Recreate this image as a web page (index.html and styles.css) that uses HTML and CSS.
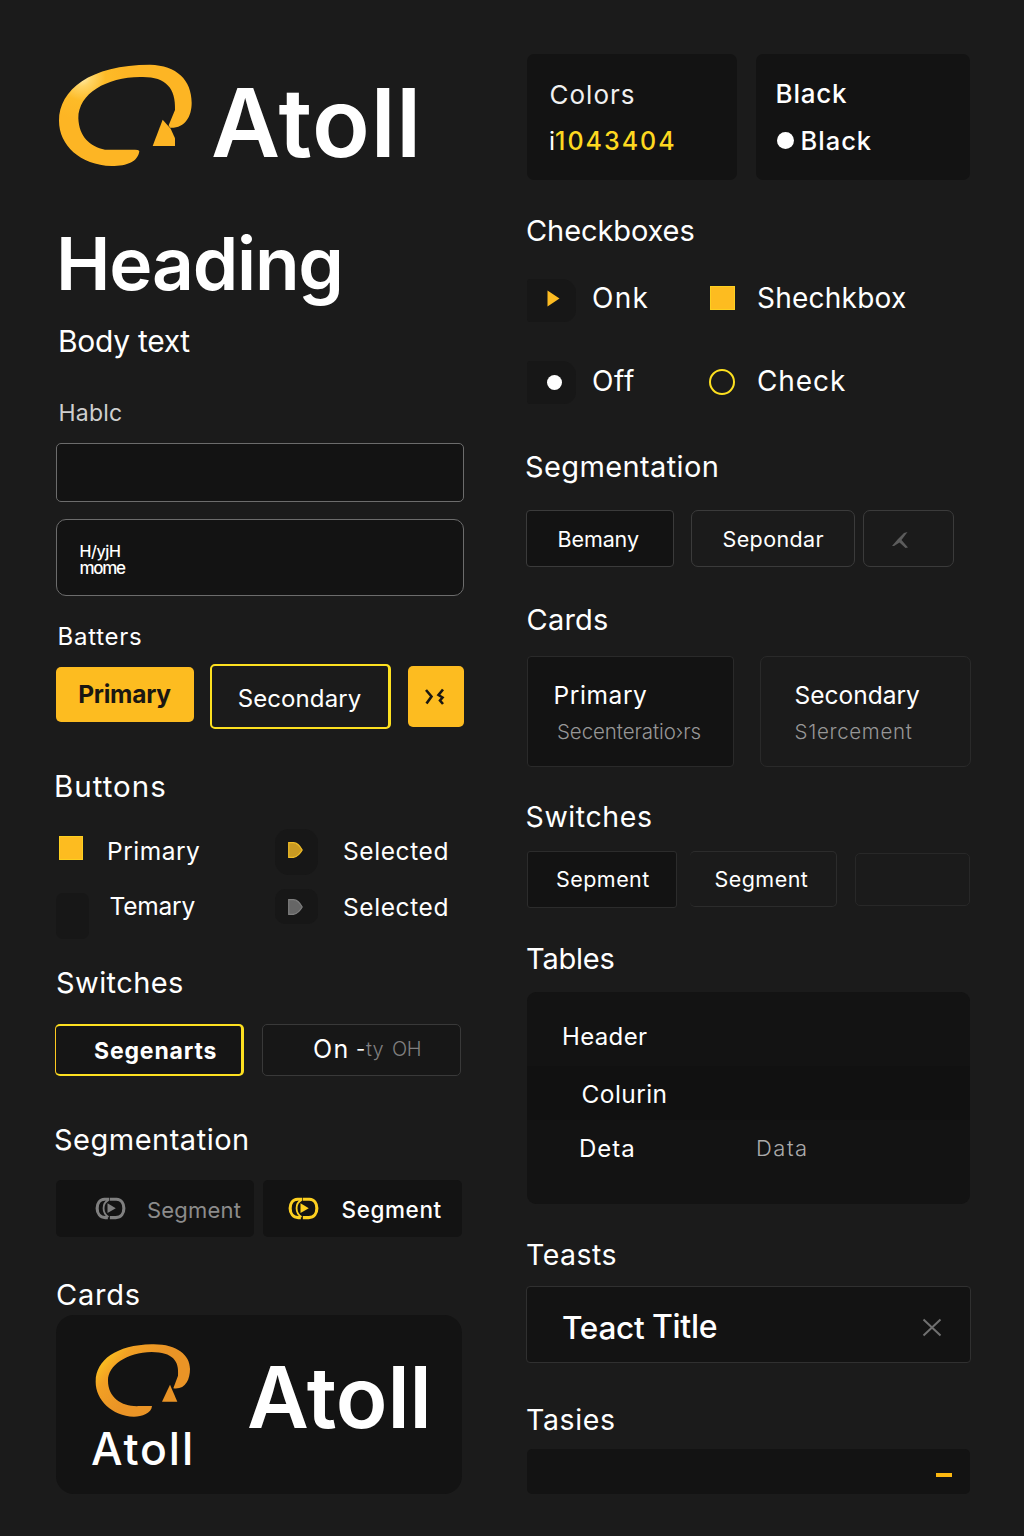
FILE: index.html
```html
<!DOCTYPE html>
<html lang="en">
<head>
<meta charset="utf-8">
<title>Atoll UI kit</title>
<link rel="stylesheet" href="styles.css">
</head>
<body>
<svg class="defs" aria-hidden="true">
  <defs>
    <radialGradient id="gold" gradientUnits="userSpaceOnUse" cx="125" cy="80" r="130">
      <stop offset="0" stop-color="#fff0b8"/>
      <stop offset=".22" stop-color="#ffd566"/>
      <stop offset=".55" stop-color="#fdbb28"/>
      <stop offset="1" stop-color="#fdb524"/>
    </radialGradient>
    <linearGradient id="amber" gradientUnits="userSpaceOnUse" x1="180" y1="170" x2="290" y2="260">
      <stop offset="0" stop-color="#fdc81f"/>
      <stop offset=".4" stop-color="#f2a024"/>
      <stop offset="1" stop-color="#ea9426"/>
    </linearGradient>
    <symbol id="link" viewBox="160 228 100 74">
      <path d="M206 237H192C177 238 169.500 250 169.500 264C169.500 280 179 292 194 292.500H202M208 237H228C243 238 250.500 250 250.500 264C250.500 280 242 292 226 292.500H208" fill="none" stroke="currentColor" stroke-width="9.500"/>
      <path d="M204 239C184 250 184 278 204 291" fill="none" stroke="currentColor" stroke-width="5.500"/>
      <path d="M201 249L226 264.500L201 279Z" fill="currentColor"/>
    </symbol>
  </defs>
</svg>
<main class="page">
  <div class="col left">
    <header class="brand">
      <svg class="brand-logo" viewBox="48 30 420 330">
        <path fill="url(#gold)" d="M298 303C294 335 262 348 215 348C120 345 57 285 57 212C57 120 150 44 330 44C410 46 455 90 455 158C455 200 435 235 390 233L386 226L405 180C408 112 375 78 300 81C200 82 115 130 115 205C117 260 150 290 195 299L285 299Q296 299 298 303Z"/>
        <path fill="url(#gold)" d="M368 209L392 236L405 265V288H338Z"/>
      </svg>
      <span class="wordmark">Atoll</span>
    </header>
    <h1 class="heading">Heading</h1>
    <p class="body-text">Body text</p>
    <p class="label">Hablc</p>
    <div class="input"></div>
    <div class="input area"><span class="ln1">H/yjH</span><span class="ln2">mome</span></div>
    <p class="label strong">Batters</p>
    <div class="btn-row">
      <div class="btn primary">Primary</div>
      <div class="btn outline">Secondary</div>
      <div class="btn icon">
        <svg width="22" height="18" viewBox="0 0 22 18" fill="none" stroke="#1a1712" stroke-width="2.6"><path d="M2 2L7.500 8.500L2.500 15.500M19 1.500L14.500 7L18.500 9.500L16 12.500L19 16"/></svg>
      </div>
    </div>
    <h2 class="title t-buttons">Buttons</h2>
    <div class="opt-row one">
      <i class="square"></i><span class="opt prim">Primary</span>
      <i class="tile"><svg width="15" height="16" viewBox="0 0 15 16"><path d="M.7.700H5.500C9.500 1 12 4 14.200 8C12 12 9.500 14.500 5.500 15.300H.7Z" fill="#c99a22" stroke="#f0bd28" stroke-width="1.200"/></svg></i>
      <span class="opt sel">Selected</span>
    </div>
    <div class="opt-row two">
      <i class="blank"></i><span class="opt tem">Temary</span>
      <i class="tile low"><svg width="15" height="16" viewBox="0 0 15 16"><path d="M.7.700H5.500C9.500 1 12 4 14.200 8C12 12 9.500 14.500 5.500 15.300H.7Z" fill="#666" stroke="#7e7e7e" stroke-width="1.200"/></svg></i>
      <span class="opt sel low">Selected</span>
    </div>
    <h2 class="title t-sw">Switches</h2>
    <div class="switch-row">
      <div class="switch active">Segenarts</div>
      <div class="switch"><span class="on">On</span><span class="dash">-</span><span class="off">ty</span><span class="off last">OH</span></div>
    </div>
    <h2 class="title t-seg">Segmentation</h2>
    <div class="seg-row">
      <div class="seg"><svg class="link"><use href="#link"/></svg><span>Segment</span></div>
      <div class="seg active"><svg class="link"><use href="#link"/></svg><span>Segment</span></div>
    </div>
    <h2 class="title t-cards">Cards</h2>
    <div class="logo-card">
      <div class="stack">
        <svg class="small-logo" viewBox="156 120 300 240">
          <path fill="url(#amber)" d="M336 318C335 340 305 350 282 350C215 347 167 300 167 245C167 180 230 135 335 133C410 131 450 165 450 207C450 240 435 270 400 265L414 227C418 182 398 157 335 156C260 158 204 195 204 242C204 295 250 322 300 318Z"/>
          <path fill="url(#amber)" d="M390 254L412 305H366Z"/>
        </svg>
        <span class="small-mark">Atoll</span>
      </div>
      <span class="big-mark">Atoll</span>
    </div>
  </div>

  <div class="col right">
    <div class="color-row">
      <div class="swatch"><span class="c1">Colors</span><span class="c2">i<b>1043404</b></span></div>
      <div class="swatch black"><span class="c3">Black</span><span class="c4"><i class="dot"></i>Black</span></div>
    </div>
    <h2 class="title r-check">Checkboxes</h2>
    <div class="check-row">
      <i class="ctile"><svg width="13" height="17" viewBox="0 0 13 17"><path d="M.5.500L12.500 8.500L.5 16.500Z" fill="#fdbc22"/></svg></i>
      <span class="chk onk">Onk</span>
      <i class="square wide"></i>
      <span class="chk box">Shechkbox</span>
    </div>
    <div class="check-row second">
      <i class="ctile"><i class="knob"></i></i>
      <span class="chk offw">Off</span>
      <i class="ring"></i>
      <span class="chk check">Check</span>
    </div>
    <h2 class="title r-seg">Segmentation</h2>
    <div class="pill-row">
      <div class="pill filled">Bemany</div>
      <div class="pill mid">Sepondar</div>
      <div class="pill back"><svg width="17" height="17" viewBox="0 0 17 17"><path d="M15.500 0L9.500 8L16 15.500L13.500 16L7.500 10.500L2 14H0L6 7L12 1Z" fill="#5c5c5c"/></svg></div>
    </div>
    <h2 class="title r-cards">Cards</h2>
    <div class="card-row">
      <div class="card filled"><span class="h">Primary</span><span class="s">Secenteratio›rs</span></div>
      <div class="card"><span class="h">Secondary</span><span class="s">S1ercement</span></div>
    </div>
    <h2 class="title r-sw">Switches</h2>
    <div class="tab-row">
      <div class="tab filled">Sepment</div>
      <div class="tab open">Segment</div>
      <div class="tab empty"></div>
    </div>
    <h2 class="title r-tab">Tables</h2>
    <div class="table">
      <div class="tr head"><span>Header</span></div>
      <div class="tr column"><span>Colurin</span></div>
      <div class="tr data"><span class="d1">Deta</span><span class="d2">Data</span></div>
    </div>
    <h2 class="title r-toast">Teasts</h2>
    <div class="toast">
      <span class="tt">Teact</span><span class="tt2">Title</span>
      <svg width="20" height="19" viewBox="0 0 20 19" fill="none" stroke="#707070" stroke-width="2"><path d="M1.500 1.500L18.500 17.500M18.500 1.500L1.500 17.500"/></svg>
    </div>
    <h2 class="title r-tas">Tasies</h2>
    <div class="bar"><i class="minus"></i></div>
  </div>
</main>
</body>
</html>
```
FILE: styles.css
```css
* { box-sizing: border-box; }
body {
  margin: 0;
  background: #1b1b1b;
  color: #fff;
  font-family: "Inter", sans-serif;
  -webkit-font-smoothing: antialiased;
}
h1, h2, p { margin: 0; font-weight: 400; }
i { font-style: normal; flex: none; }
svg { display: block; flex: none; }
span { white-space: nowrap; }
.defs { position: absolute; width: 0; height: 0; }

.page { display: flex; width: 1024px; height: 1536px; overflow: hidden; }
.col { display: flex; flex-direction: column; flex: none; }
.left { width: 408px; margin-left: 56px; }
.right { width: 443px; margin-left: 63px; }

.title { font-size: 29px; line-height: 30px; height: 30px; white-space: nowrap; }

/* brand */
.brand { display: flex; align-items: center; gap: 15px; height: 126px; margin-top: 60px; }
.brand-logo { width: 140px; height: 110px; align-self: flex-start; }
.wordmark { font-size: 95px; line-height: 100px; font-weight: 600; letter-spacing: .8px; }
.heading { margin: 38px 0 0 0; font-size: 73px; line-height: 80px; font-weight: 600; letter-spacing: -1.2px; }
.body-text { margin: 22px 0 0 2px; font-size: 30px; line-height: 30px; letter-spacing: -.3px; }
.label { margin: 44.500px 0 0 2.500px; font-size: 23px; line-height: 24px; letter-spacing: .2px; color: #cfcfcf; }
.label.strong { margin: 29px 0 0 1.500px; font-size: 24px; font-weight: 400; letter-spacing: .75px; color: #fff; }

.input { height: 59px; margin-top: 18.500px; border: 1.500px solid #6c6c6c; border-radius: 5px; background: #131313; }
.area { display: flex; flex-direction: column; height: 77px; margin-top: 17px; padding: 23px 0 0 22.500px; border: 1px solid #6c6c6c; border-radius: 10px; font-weight: 500; }
.ln1 { font-size: 16px; line-height: 17px; letter-spacing: -.4px; }
.ln2 { font-size: 17px; line-height: 17px; letter-spacing: -1.300px; }

/* buttons */
.btn-row { display: flex; height: 65px; margin: 14.500px 0 0 -.5px; }
.btn { display: flex; justify-content: center; align-items: center; flex: none; border-radius: 5px; }
.btn.primary { width: 138px; height: 55px; margin-top: 3px; background: #fdbc20; color: #1a1712; font-size: 24.500px; font-weight: 700; letter-spacing: -.25px; }
.btn.outline { width: 181px; height: 65px; margin-left: 16px; padding: 4px 0 0 0; border: 2px solid #fde020; border-right-width: 3px; font-size: 24px; letter-spacing: .09px; }
.btn.icon { width: 56px; height: 61px; margin: 2px 0 0 17px; padding: 1px 1px 0 0; background: #fdbc20; }

.t-buttons { margin-top: 42px; margin-left: -2px; font-size: 29.5px; letter-spacing: 1px; }
.opt-row { display: flex; align-items: flex-start; }
.opt-row.one { height: 46px; margin-top: 28px; }
.opt-row.two { height: 50px; margin-top: 14px; }
.square { width: 24px; height: 24px; margin: 7px 0 0 3px; background: #fdbc20; border: 1px solid #fdd020; }
.opt { font-size: 24.5px; line-height: 30px; }
.opt.prim { width: 142px; margin: 7.500px 0 0 24px; letter-spacing: .5px; }
.opt.tem { width: 143px; margin: 2px 0 0 20.500px; letter-spacing: -.2px; }
.tile { display: flex; width: 43px; height: 46px; margin: 0 0 0 26px; padding: 13px 0 0 13px; border-radius: 14px; background: #171717; }
.tile.low { height: 35px; margin-left: 22.500px; padding-top: 10.500px; border-radius: 10px; }
.opt.sel { margin: 7px 0 0 25px; letter-spacing: .6px; }
.opt.sel.low { margin: 3.500px 0 0 25px; }
.blank { width: 33px; height: 46px; margin-top: 4.500px; border-radius: 7px; background: #171717; }

/* switches */
.t-sw { margin-top: 29.500px; letter-spacing: .4px; }
.switch-row { display: flex; gap: 18px; height: 52px; margin: 26px 0 0 -1px; }
.switch { display: flex; align-items: center; width: 199px; padding: 0 0 3px 50px; border: 1px solid #393939; border-radius: 5px; background: #171717; }
.switch.active { width: 189px; padding: 1px 0 0 38px; border: 2px solid #fde020; border-right-width: 3px; border-left: 1.500px solid #fdc820; background: #151515; font-size: 23px; font-weight: 700; letter-spacing: .85px; }
.on { width: 43px; font-size: 25px; letter-spacing: 1.5px; }
.dash { width: 10px; font-size: 20px; line-height: 30px; }
.off { width: 26px; font-size: 20px; font-weight: 300; color: #808080; }
.off.last { letter-spacing: -.5px; }

/* segmentation */
.t-seg { margin-top: 49px; margin-left: -2px; letter-spacing: .5px; }
.seg-row { display: flex; gap: 8.500px; height: 57px; margin-top: 25px; }
.seg { display: flex; align-items: center; width: 198px; padding: 2px 0 0 37px; border-radius: 5px; background: #131313; color: #8c8c8c; font-size: 22px; letter-spacing: .2px; }
.seg.active { width: 199.500px; padding-left: 24px; color: #fff; font-size: 22.5px; font-weight: 500; letter-spacing: .6px; }
.link { width: 33px; height: 25px; margin: -3px 20.500px 0 .5px; color: #808080; }
.active .link { color: #fdd020; margin-right: 21.500px; }

.t-cards { margin-top: 43px; letter-spacing: .8px; }
.logo-card { display: flex; width: 406px; height: 179px; margin-top: 5px; padding: 25px 0 0 36px; border-radius: 18px; background: #131313; }
.stack { display: flex; flex-direction: column; width: 155px; }
.small-logo { width: 100px; height: 80px; }
.small-mark { margin: 4px 0 0 -1px; font-size: 44.5px; line-height: 50px; font-weight: 500; letter-spacing: 1.900px; }
.big-mark { margin-top: 13px; font-size: 85px; line-height: 90px; font-weight: 600; letter-spacing: -.1px; }

/* colours */
.color-row { display: flex; gap: 18.500px; height: 126px; margin-top: 54px; }
.swatch { display: flex; flex-direction: column; flex: none; width: 210px; padding: 26px 0 0 22px; border-radius: 7px; background: #131313; line-height: 30px; }
.c1 { font-size: 26px; margin-left: .5px; color: #f0f0f0; letter-spacing: 1px; }
.c2 { margin-top: 16px; font-size: 25px; font-weight: 400; }
.c2 b { font-weight: 500; color: #fdd820; letter-spacing: 2px; }
.swatch.black { width: 214.500px; padding: 24.500px 0 0 20px; font-weight: 500; }
.c3 { font-size: 26px; letter-spacing: .8px; }
.c4 { display: flex; align-items: center; margin-top: 17px; font-size: 25.5px; letter-spacing: 1px; }
.dot { width: 17px; height: 17px; margin: 0 6.500px 0 1.500px; border-radius: 50%; background: #fff; }

/* checkboxes */
.r-check { margin: 35.500px 0 0 -1px; letter-spacing: -.1px; }
.check-row { display: flex; height: 43px; margin-top: 33.500px; }
.check-row.second { margin-top: 39px; }
.ctile { display: flex; width: 49px; height: 43px; padding: 11px 0 0 19.500px; border-radius: 3px 14px 12px 3px; background: #171717; }
.knob { width: 15px; height: 15px; margin-top: 3px; border-radius: 50%; background: #fff; }
.chk { font-size: 28px; line-height: 30px; margin-top: 4px; }
.onk { width: 117px; margin-left: 16px; letter-spacing: 1.300px; }
.offw { width: 116px; margin-left: 16px; letter-spacing: .66px; }
.square.wide { width: 25px; margin: 7px 0 0 1px; }
.box { margin-left: 22px; letter-spacing: .24px; }
.ring { width: 26px; height: 26px; margin: 7.500px 0 0 1px; border: 2.500px solid #fde020; border-radius: 50%; }
.check { margin-left: 22px; letter-spacing: .92px; }
.check-row.second .chk { margin-top: 5px; }

.r-seg { margin: 48px 0 0 -2px; letter-spacing: .38px; }
.pill-row { display: flex; height: 57px; margin: 28px 0 0 -1px; font-size: 21.5px; }
.pill { display: flex; align-items: center; flex: none; padding: 1px 0 0 30.500px; border: 1px solid #3b3b3b; border-radius: 7px; }
.pill.filled { width: 148px; border-radius: 4px; background: #131313; letter-spacing: -.1px; }
.pill.mid { width: 164px; margin-left: 17px; letter-spacing: .38px; }
.pill.back { width: 91px; margin-left: 8px; padding-top: 3px; padding-left: 28px; }

/* cards */
.r-cards { margin-top: 37.500px; margin-left: -.5px; letter-spacing: .21px; }
.card-row { display: flex; gap: 26px; height: 111px; margin-top: 21.500px; }
.card { display: flex; flex-direction: column; flex: none; width: 211px; padding: 22.500px 0 0 33.500px; border: 1px solid #2a2a2a; border-radius: 7px; }
.card.filled { width: 207px; padding-left: 25.500px; border-radius: 4px; background: #131313; }
.h { font-size: 24.5px; line-height: 30px; letter-spacing: 0; }
.filled .h { letter-spacing: .6px; }
.s { margin-top: 7px; font-size: 20.5px; line-height: 30px; font-weight: 300; letter-spacing: .68px; color: #979797; }
.filled .s { margin-left: 3.500px; letter-spacing: -.08px; }

.r-sw { margin: 34.500px 0 0 -1.500px; font-size: 28.5px; letter-spacing: .6px; }
.tab-row { display: flex; height: 57px; margin-top: 19.500px; font-size: 21.5px; letter-spacing: .45px; }
.tab { display: flex; align-items: center; flex: none; border: 1px solid #2c2c2c; border-radius: 5px; }
.tab.filled { width: 150px; padding: 0 0 1px 28px; border-radius: 3px; background: #131313; }
.tab.open { width: 147px; height: 56px; margin-left: 13px; padding: 0 0 0 24.500px; border-left: 0; }
.tab.empty { width: 115px; height: 53px; margin: 2px 0 0 18px; border-color: #282828; }

/* table */
.r-tab { margin: 36px 0 0 -1px; letter-spacing: -.2px; }
.table { height: 212px; margin-top: 18px; border-radius: 9px; background: #131313; }
.tr { display: flex; align-items: center; height: 54px; padding-left: 54.500px; }
.tr.head { height: 74px; padding: 15.500px 0 0 35px; font-size: 24px; letter-spacing: .35px; }
.tr.column { padding-top: 1.500px; background: #111; font-size: 24.5px; letter-spacing: .42px; }
.tr.data { padding: 2.500px 0 0 52px; font-size: 24px; }
.d1 { width: 177px; letter-spacing: 1px; }
.d2 { margin-top: -1.500px; font-size: 22px; font-weight: 300; letter-spacing: 1.5px; color: #ababab; }

/* toasts */
.r-toast { margin: 36px 0 0 -1px; font-size: 28.5px; letter-spacing: .47px; }
.toast { display: flex; align-items: center; width: 445px; height: 77px; margin: 16px 0 0 -1px; padding: 6px 28px 0 35px; border: 1px solid #303030; border-radius: 4px; background: #131313; font-weight: 500; }
.tt { width: 90px; font-size: 31.5px; letter-spacing: -.25px; }
.tt2 { margin-top: -3px; font-size: 32px; letter-spacing: -.3px; flex: 1; }
.r-tas { margin: 42px 0 0 -1px; font-size: 28.5px; letter-spacing: .65px; }
.bar { display: flex; justify-content: flex-end; align-items: center; height: 45px; margin-top: 14px; padding: 6px 18px 0 0; border-radius: 5px; background: #131313; }
.minus { width: 16px; height: 4px; background: #fdb810; }
```
